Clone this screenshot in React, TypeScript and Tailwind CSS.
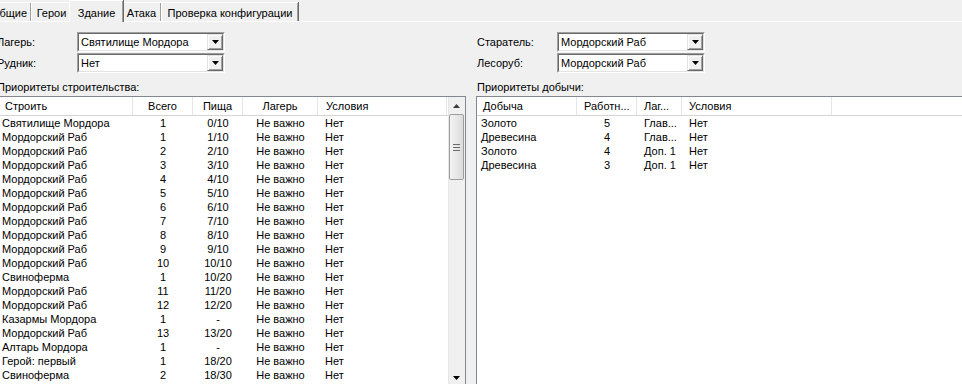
import React from 'react'

const font = { fontFamily: '"Liberation Sans", Arial, sans-serif' }

const buildRows: [string, string, string][] = [
  ['Святилище Мордора', '1', '0/10'],
  ['Мордорский Раб', '1', '1/10'],
  ['Мордорский Раб', '2', '2/10'],
  ['Мордорский Раб', '3', '3/10'],
  ['Мордорский Раб', '4', '4/10'],
  ['Мордорский Раб', '5', '5/10'],
  ['Мордорский Раб', '6', '6/10'],
  ['Мордорский Раб', '7', '7/10'],
  ['Мордорский Раб', '8', '8/10'],
  ['Мордорский Раб', '9', '9/10'],
  ['Мордорский Раб', '10', '10/10'],
  ['Свиноферма', '1', '10/20'],
  ['Мордорский Раб', '11', '11/20'],
  ['Мордорский Раб', '12', '12/20'],
  ['Казармы Мордора', '1', '-'],
  ['Мордорский Раб', '13', '13/20'],
  ['Алтарь Мордора', '1', '-'],
  ['Герой: первый', '1', '18/20'],
  ['Свиноферма', '2', '18/30'],
]

const mineRows: [string, string, string][] = [
  ['Золото', '5', 'Глав...'],
  ['Древесина', '4', 'Глав...'],
  ['Золото', '4', 'Доп. 1'],
  ['Древесина', '3', 'Доп. 1'],
]

function Arrow({ up }: { up?: boolean }) {
  return (
    <svg width="7" height="4" viewBox="0 0 7 4">
      <path d={up ? 'M3.5 0L7 4H0z' : 'M0 0h7L3.5 4z'} fill={up ? '#3c3c3c' : '#000'} />
    </svg>
  )
}

function ComboBox({ value }: { value: string }) {
  return (
    <div className="flex h-[20px] w-[148px] border border-t-[#a0a0a0] border-l-[#a0a0a0] border-r-white border-b-white">
      <div className="flex flex-1 border border-t-[#696969] border-l-[#696969] border-r-[#e3e3e3] border-b-[#e3e3e3] bg-white">
        <span className="flex-1 pl-[2px] leading-[16px] text-black">{value}</span>
        <div className="flex w-[16px] items-center justify-center border border-t-[#e3e3e3] border-l-[#e3e3e3] border-r-[#696969] border-b-[#696969] bg-[#f0f0f0] shadow-[inset_1px_1px_0_#fff,inset_-1px_-1px_0_#a0a0a0]">
          <Arrow />
        </div>
      </div>
    </div>
  )
}

function Tab({ label, width, active }: { label: string; width: string; active?: boolean }) {
  if (active) {
    return (
      <div
        className={`relative z-10 -mx-[2px] -mb-px flex h-[22px] items-start justify-center border-l border-t border-white bg-[#f0f0f0] pt-[4px] shadow-[inset_-1px_0_0_#a0a0a0,1px_0_0_#696969] ${width}`}
      >
        {label}
      </div>
    )
  }
  return (
    <div
      className={`flex h-[19px] items-center justify-center border-l border-t border-white bg-[#f0f0f0] pt-[3px] shadow-[inset_-1px_0_0_#a0a0a0,1px_0_0_#696969] ${width}`}
    >
      {label}
    </div>
  )
}

function HeaderCell({ label, w, align = 'left', pl = 'pl-[7px]' }: { label: string; w: string; align?: string; pl?: string }) {
  return (
    <div
      className={`flex h-full shrink-0 items-center border-r border-[#e5e5e5] ${w} ${
        align === 'center' ? 'justify-center' : pl
      }`}
    >
      {label}
    </div>
  )
}

function Scrollbar() {
  return (
    <div className="flex h-full w-[17px] shrink-0 flex-col bg-[#f0f0f0] shadow-[inset_1px_0_0_#e6e6e6]">
      <div className="flex h-[17px] items-center justify-center">
        <Arrow up />
      </div>
      <div className="mx-[1px] flex h-[66px] items-center justify-center rounded-[2px] border border-[#9c9c9c] bg-gradient-to-r from-[#f3f3f3] to-[#dcdcdc]">
        <div className="flex flex-col gap-[2px]">
          <div className="h-px w-[7px] bg-[#6a6a6a]" />
          <div className="h-px w-[7px] bg-[#6a6a6a]" />
          <div className="h-px w-[7px] bg-[#6a6a6a]" />
        </div>
      </div>
      <div className="flex-1" />
      <div className="flex h-[17px] items-center justify-center">
        <Arrow up={false} />
      </div>
    </div>
  )
}

export default function App() {
  return (
    <div className="h-[384px] w-[962px] overflow-hidden bg-[#f0f0f0] text-[11px] text-black" style={font}>
      {/* tab strip */}
      <div className="flex h-[22px] items-end border-b border-white">
        <div className="-ml-[14px] flex items-end">
          <Tab label="Общие" width="w-[45px]" />
          <Tab label="Герои" width="w-[40px]" />
          <Tab label="Здание" width="w-[54px]" active />
          <Tab label="Атака" width="w-[40px]" />
          <Tab label="Проверка конфигурации" width="w-[137px]" />
        </div>
      </div>

      <div className="flex">
        {/* left side */}
        <div className="-ml-[3px] w-[469px] shrink-0">
          <div className="mt-[10px] flex flex-col gap-[1px]">
            <div className="flex items-center">
              <span className="w-[80px]">Лагерь:</span>
              <ComboBox value="Святилище Мордора" />
            </div>
            <div className="flex items-center">
              <span className="w-[80px]">Рудник:</span>
              <ComboBox value="Нет" />
            </div>
          </div>
          <div className="h-[23px] pt-[8px] leading-[13px]">Приоритеты строительства:</div>
          <div className="flex h-[291px] border border-[#828790] bg-white">
            <div className="flex flex-1 flex-col">
              <div className="flex h-[19px] shrink-0 border-b border-[#d5d5d5]">
                <HeaderCell label="Строить" w="w-[135px]" />
                <HeaderCell label="Всего" w="w-[60px]" align="center" />
                <HeaderCell label="Пища" w="w-[50px]" align="center" />
                <HeaderCell label="Лагерь" w="w-[75px]" align="center" />
                <HeaderCell label="Условия" w="w-[129px]" pl="pl-[8px]" />
              </div>
              <div className="flex flex-col">
                {buildRows.map(([name, total, food], i) => (
                  <div key={i} className="flex h-[14px] items-center leading-[14px]">
                    <span className="w-[135px] shrink-0 pl-[4px]">{name}</span>
                    <span className="w-[60px] shrink-0 text-center">{total}</span>
                    <span className="w-[50px] shrink-0 text-center">{food}</span>
                    <span className="w-[75px] shrink-0 text-center">Не важно</span>
                    <span className="pl-[7px]">Нет</span>
                  </div>
                ))}
              </div>
            </div>
            <Scrollbar />
          </div>
        </div>

        {/* right side */}
        <div className="ml-[10px] flex-1">
          <div className="mt-[10px] flex flex-col gap-[1px]">
            <div className="flex items-center">
              <span className="w-[81px] pl-[1px]">Старатель:</span>
              <ComboBox value="Мордорский Раб" />
            </div>
            <div className="flex items-center">
              <span className="w-[81px] pl-[1px]">Лесоруб:</span>
              <ComboBox value="Мордорский Раб" />
            </div>
          </div>
          <div className="h-[23px] pl-[1px] pt-[8px] leading-[13px]">Приоритеты добычи:</div>
          <div className="flex h-[291px] flex-col border border-r-0 border-[#828790] bg-white">
            <div className="flex h-[19px] shrink-0 border-b border-[#d5d5d5]">
              <HeaderCell label="Добыча" w="w-[100px]" pl="pl-[6px]" />
              <HeaderCell label="Работн..." w="w-[60px]" />
              <HeaderCell label="Лаг..." w="w-[45px]" />
              <HeaderCell label="Условия" w="w-[150px]" />
            </div>
            <div className="flex flex-col">
              {mineRows.map(([res, workers, camp], i) => (
                <div key={i} className="flex h-[14px] items-center leading-[14px]">
                  <span className="w-[100px] shrink-0 pl-[4px]">{res}</span>
                  <span className="w-[60px] shrink-0 text-center">{workers}</span>
                  <span className="w-[45px] shrink-0 pl-[7px]">{camp}</span>
                  <span className="pl-[7px]">Нет</span>
                </div>
              ))}
            </div>
          </div>
        </div>
      </div>
    </div>
  )
}
